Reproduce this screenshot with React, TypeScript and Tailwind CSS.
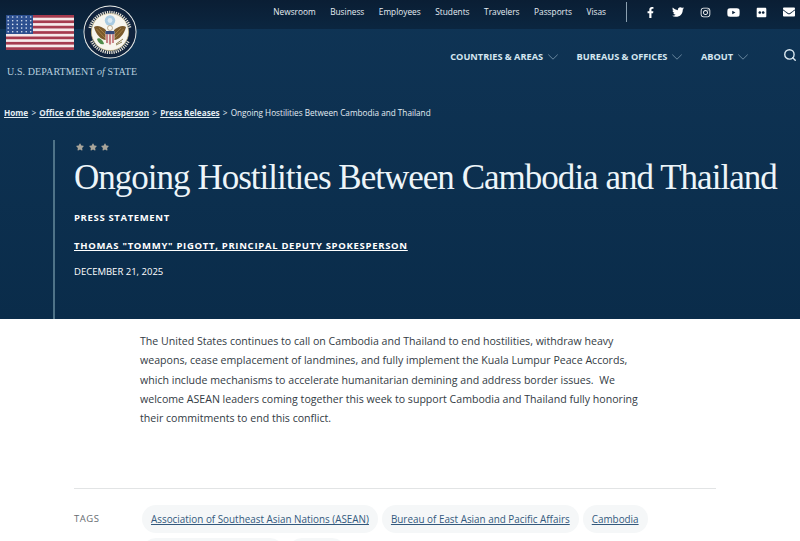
import { Search } from "lucide-react";
import { FaFacebookF, FaTwitter, FaInstagram, FaYoutube, FaFlickr, FaEnvelope, FaStar } from "react-icons/fa";

const sans = "font-['Open_Sans',sans-serif]";

function Flag() {
  const stripes = [0, 1, 2, 3, 4, 5, 6];
  const stars: [number, number][] = [];
  for (let r = 0; r < 5; r++) for (let c = 0; c < 6; c++) stars.push([2.2 + c * 4.5, 2 + r * 3.7]);
  return (
    <svg width="68" height="35" viewBox="0 0 68 35" className="block">
      <rect width="68" height="35" fill="#f6e9ea" />
      {stripes.map((i) => (
        <rect key={i} y={i * 5.38} width="68" height="2.7" fill="#a53a4e" />
      ))}
      <rect width="27" height="19" fill="#2c4f8f" />
      {stars.map(([x, y], i) => (
        <circle key={i} cx={x} cy={y} r="0.8" fill="#dfe8f5" />
      ))}
    </svg>
  );
}

function Seal() {
  return (
    <svg width="54" height="54" viewBox="0 0 54 54" className="block">
      <circle cx="27" cy="27" r="26.5" fill="#f2f3ef" />
      <circle cx="27" cy="27" r="25.6" fill="#10233d" />
      <circle cx="27" cy="27" r="18.6" fill="#f7f5ee" stroke="#c9b67e" strokeWidth="0.7" />
      <g fill="none" stroke="#e6e2d6" strokeWidth="3" strokeDasharray="1.2 1">
        <path d="M7 23 A20.6 20.6 0 0 1 47 23" />
        <path d="M8.5 36 A20.6 20.6 0 0 0 45.5 36" />
      </g>
      <circle cx="27" cy="15.5" r="5.2" fill="#a9cbe2" />
      <circle cx="27" cy="15.5" r="2.4" fill="#d8e8f2" />
      <path d="M11 22 C14 20 18 21 23 25 L24 35 C19 36 13 30 11 22Z" fill="#7b5a2b" />
      <path d="M43 22 C40 20 36 21 31 25 L30 35 C35 36 41 30 43 22Z" fill="#7b5a2b" />
      <path d="M13.5 24 L22 33 M16 23 L23 30 M40.5 24 L32 33 M38 23 L31 30" stroke="#b08d4f" strokeWidth="0.7" />
      <circle cx="27" cy="23" r="2.5" fill="#fbf8ee" stroke="#8a6a38" strokeWidth="0.5" />
      <path d="M22.5 26 H31.5 V34 Q31.5 38 27 39.5 Q22.5 38 22.5 34Z" fill="#f0e6e0" />
      <rect x="22.5" y="26" width="9" height="3.2" fill="#34497a" />
      <path d="M24 29.2 V38 M27 29.2 V39.5 M30 29.2 V38" stroke="#a8323d" strokeWidth="1.1" />
      <path d="M14 34 C16 32 20 35 21 39 C18 40 15 38 14 34Z" fill="#4e8b4a" />
      <path d="M40 34 L33 39 M39 37 L33 40" stroke="#8f7f52" strokeWidth="1" />
    </svg>
  );
}

function TopLink({ children }: { children: string }) {
  return <a className="text-[8.3px] leading-[12px] text-[#e6eef4]">{children}</a>;
}

function MainNav({ children }: { children: string }) {
  return (
    <a className="flex items-center gap-[5px] text-[9.2px] leading-[12px] font-bold text-[#d5e6f0]">
      {children}
      <svg width="10" height="6" viewBox="0 0 10 6" className="block text-[#7f9cb1]">
        <path d="M0.3 0.6 L5 5.2 L9.7 0.6" fill="none" stroke="currentColor" strokeWidth="0.8" />
      </svg>
    </a>
  );
}

function Tag({ children }: { children: string }) {
  return (
    <a className="rounded-[14px] bg-[#f5f7f8] px-[9px] py-[6px] text-[9.9px] leading-[16px] text-[#33597d] underline">
      {children}
    </a>
  );
}

export default function App() {
  return (
    <div className={`${sans} relative h-[541px] w-[800px] overflow-hidden bg-white`}>
      <div className="relative bg-[#0d3050] bg-gradient-to-b from-[#0f3455] to-[#0a2c4a]">
        <div className="absolute left-[6px] top-[5px] flex flex-col">
          <div className="flex items-start gap-[9px]">
            <div className="mt-[10px]">
              <Flag />
            </div>
            <Seal />
          </div>
          <div className="mt-[7px] whitespace-nowrap pl-[1px] font-['Liberation_Serif',serif] text-[10px] leading-[12px] tracking-[0.1px] text-[#b7cfdf]">
            U.S. DEPARTMENT <i>of</i> STATE
          </div>
        </div>

        <div className="flex h-[29px] items-start justify-end bg-gradient-to-b from-[#0a1e34] to-[#0b2640] pr-[5px] pt-[2px]">
          <nav className="flex h-[20px] items-center gap-[14.5px]">
            <TopLink>Newsroom</TopLink>
            <TopLink>Business</TopLink>
            <TopLink>Employees</TopLink>
            <TopLink>Students</TopLink>
            <TopLink>Travelers</TopLink>
            <TopLink>Passports</TopLink>
            <TopLink>Visas</TopLink>
          </nav>
          <div className="ml-[20px] mr-[18px] h-[20px] w-[1px] bg-[#8ba0b0]" />
          <div className="flex h-[20px] items-center gap-[16px] text-white">
            <FaFacebookF size={11} />
            <FaTwitter size={12} />
            <FaInstagram size={11} />
            <FaYoutube size={13} />
            <FaFlickr size={11} />
            <FaEnvelope size={12} />
          </div>
        </div>

        <div className="flex h-[55px] items-center justify-end pr-[3px] pt-[1px]">
          <div className="flex items-center gap-[18.5px]">
            <MainNav>COUNTRIES &amp; AREAS</MainNav>
            <MainNav>BUREAUS &amp; OFFICES</MainNav>
            <MainNav>ABOUT</MainNav>
          </div>
          <Search size={14} strokeWidth={2.4} className="mb-[4px] ml-[35px] text-[#dbe8f0]" />
        </div>

        <div className="mt-[22px] flex h-[14px] items-center gap-[3.2px] pl-[4px] text-[8.2px] leading-[12px] text-[#e4edf3]">
          <a className="font-bold underline">Home</a>
          <span>&gt;</span>
          <a className="font-bold underline">Office of the Spokesperson</a>
          <span>&gt;</span>
          <a className="font-bold underline">Press Releases</a>
          <span>&gt;</span>
          <span>Ongoing Hostilities Between Cambodia and Thailand</span>
        </div>

        <div className="ml-[53px] mt-[20px] h-[179px] border-l-2 border-[#4f7388] pl-[19px]">
          <div className="flex gap-[4.5px] pl-[2px] pt-[3px] text-[#a9a59a]">
            <FaStar size={8} />
            <FaStar size={8} />
            <FaStar size={8} />
          </div>
          <h1 className="mt-[5px] whitespace-nowrap font-['Liberation_Serif',serif] text-[35px] leading-[44px] tracking-[-0.98px] text-[#edf5f9]">
            Ongoing Hostilities Between Cambodia and Thailand
          </h1>
          <div className="mt-[11px] text-[9.5px] leading-[14px] font-bold tracking-[0.65px] text-white">PRESS STATEMENT</div>
          <a className="mt-[14px] block text-[9.5px] leading-[14px] font-bold tracking-[0.7px] text-white underline">
            THOMAS "TOMMY" PIGOTT, PRINCIPAL DEPUTY SPOKESPERSON
          </a>
          <div className="mt-[12px] text-[9.5px] leading-[14px] text-white">DECEMBER 21, 2025</div>
        </div>
      </div>

      <p className="ml-[140px] mt-[13px] w-[505px] text-[10.6px] leading-[19.3px] text-[#333b44]">
        The United States continues to call on Cambodia and Thailand to end hostilities, withdraw heavy weapons, cease
        emplacement of landmines, and fully implement the Kuala Lumpur Peace Accords, which include mechanisms to
        accelerate humanitarian demining and address border issues.&nbsp; We welcome ASEAN leaders coming together this
        week to support Cambodia and Thailand fully honoring their commitments to end this conflict.
      </p>

      <div className="ml-[74px] mt-[60px] w-[642px] border-t border-[#e2e4e5] pt-[16px]">
        <div className="flex">
          <div className="w-[68px] pt-[6px] text-[9.5px] leading-[16px] tracking-[0.5px] text-[#666c72]">TAGS</div>
          <div className="flex flex-1 flex-wrap gap-x-[4px] gap-y-[5px]">
            <Tag>Association of Southeast Asian Nations (ASEAN)</Tag>
            <Tag>Bureau of East Asian and Pacific Affairs</Tag>
            <Tag>Cambodia</Tag>
            <Tag>Office of the Spokesperson</Tag>
            <Tag>Thailand</Tag>
          </div>
        </div>
      </div>
    </div>
  );
}
